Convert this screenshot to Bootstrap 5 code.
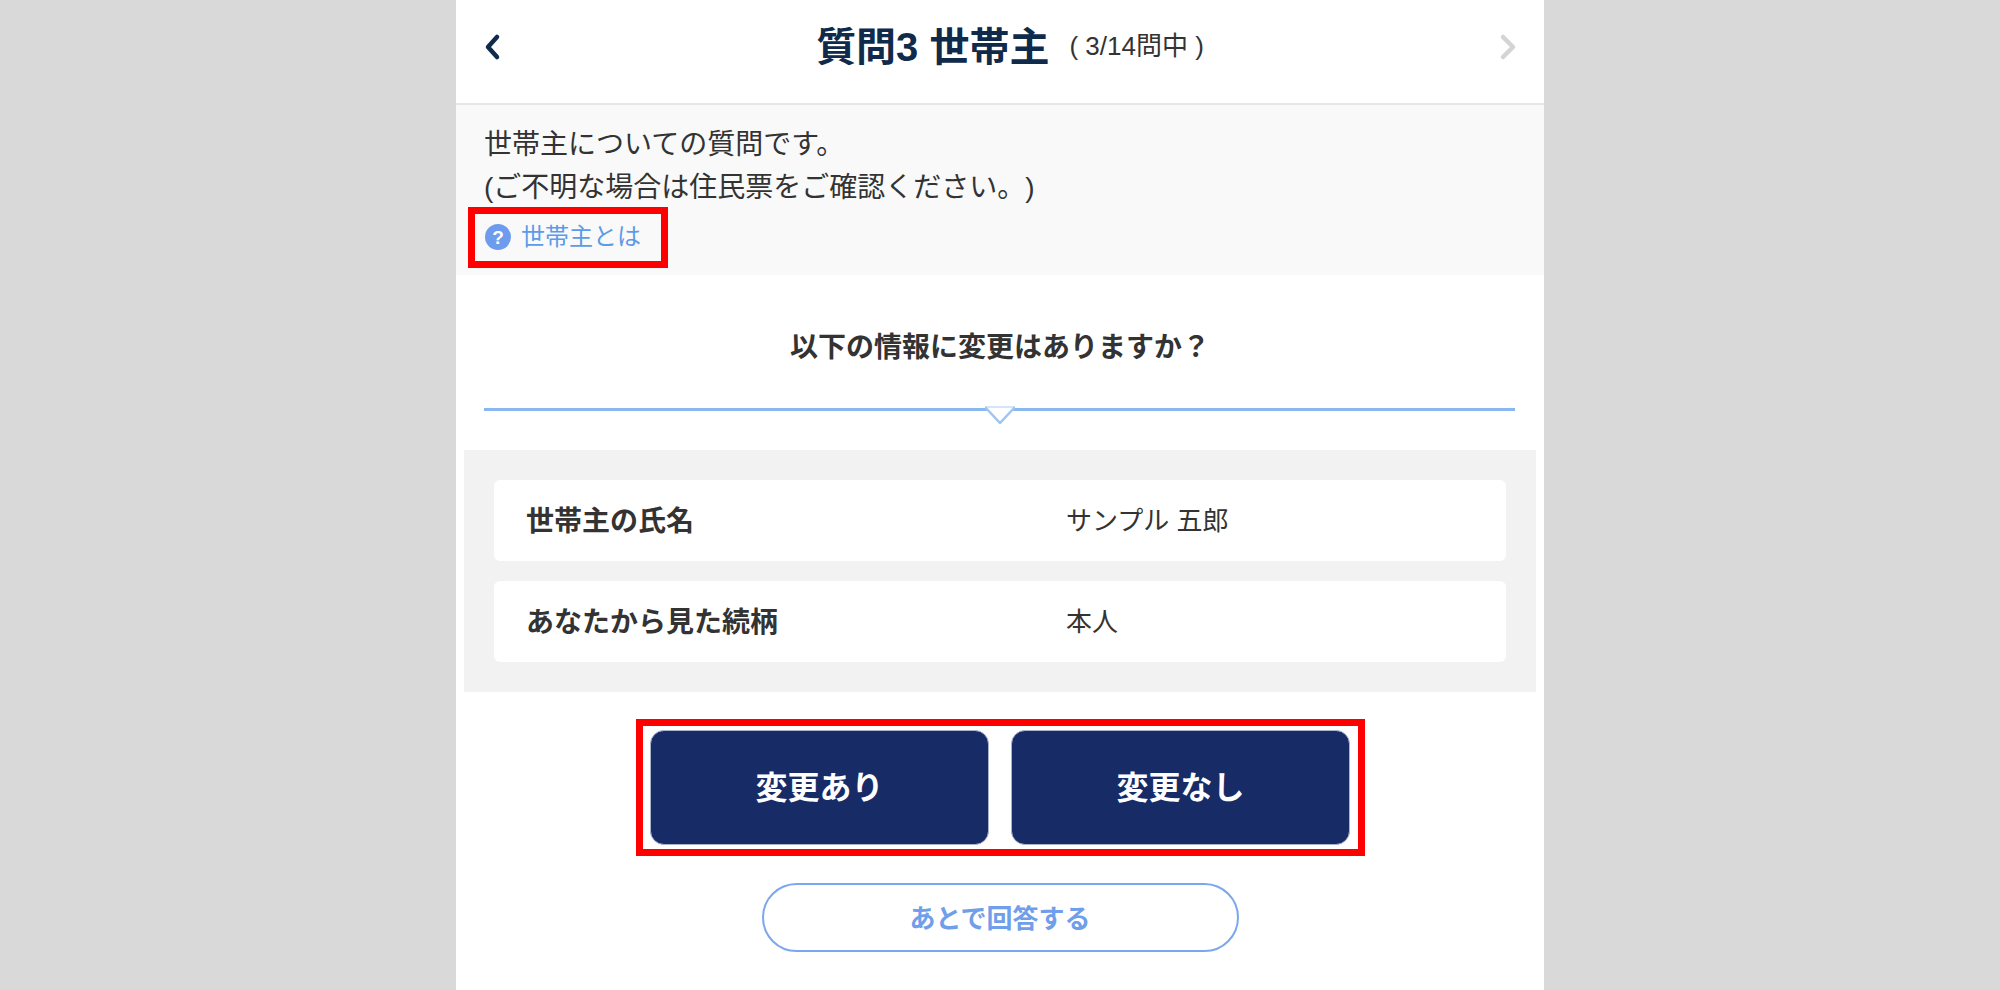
<!DOCTYPE html>
<html lang="ja">
<head>
<meta charset="utf-8">
<title>質問3 世帯主</title>
<link href="https://cdn.jsdelivr.net/npm/bootstrap@5.3.0/dist/css/bootstrap.min.css" rel="stylesheet">
<style>
html,body{height:100%;}
body{background:#d9d9d9;font-family:"Liberation Sans","Noto Sans CJK JP",sans-serif;color:#333;overflow:hidden;text-spacing-trim:space-all;}
.phone{width:1088px;height:990px;background:#fff;overflow:hidden;}
.qhead{height:105px;border-bottom:2px solid #e6e6e6;padding:0 26px 10px;}
.qtitle{font-size:40px;font-weight:700;color:#0f2a4a;margin:0;line-height:1;}
.qgroup{margin-left:20px;}
.qcount{font-size:26px;color:#333;margin-left:20px;}
.qintro{background:#f9f9f9;height:170px;padding:18px 28px 0;font-size:28px;line-height:43px;}
.qintro p{margin:0;}
.hl{border:7px solid #f00;}
.hl-link{margin:-2px 0 0 -16px;padding:1px 8px 3px 10px;width:200px;height:61px;color:#5b9be8;font-size:24px;text-decoration:none;line-height:1;gap:10px;}
.qmark{width:26px;height:26px;flex:none;}
.qq{font-size:28px;font-weight:700;text-align:center;margin:0;padding-top:54px;line-height:38px;}
.divider{height:3px;background:#8ab8ee;margin:41px 29px 0 28px;position:relative;}
.notch{position:absolute;left:50%;top:-2px;width:30px;height:18px;margin-left:-15px;}
.infobox{background:#f2f2f2;margin:39px 8px 0;padding:30px;}
.inforow{background:#fff;border-radius:6px;height:81px;font-size:26px;padding-top:2px;}
.inforow + .inforow{margin-top:20px;}
.ilabel{width:572px;padding-left:32px;font-weight:700;font-size:28px;}
.hl-btns{width:729px;height:137px;margin-top:27px;margin-left:1px;padding:4px 8px 4px 7px;gap:22px;}
.btn-main{flex:1;background:#172b66;color:#fff;border:1px solid #aab3cc;border-radius:14px;font-size:32px;font-weight:700;padding-top:6px;}
.btn-main:hover{background:#172b66;color:#fff;}
.btn-later{width:477px;height:69px;margin-top:27px;border:2px solid #7ba7ee;border-radius:35px;background:#fff;color:#6f9eea;font-size:26px;font-weight:700;padding-top:10px;}
</style>
</head>
<body>
<div class="phone mx-auto">
  <header class="qhead d-flex align-items-center justify-content-between">
    <svg width="20" height="30" viewBox="0 0 20 30" aria-hidden="true"><path d="M15 5 6 15l9 10" fill="none" stroke="#0f2a4a" stroke-width="4.5" stroke-linecap="round" stroke-linejoin="round"/></svg>
    <div class="qgroup d-flex align-items-center">
      <h1 class="qtitle">質問3 世帯主</h1>
      <span class="qcount">( 3/14問中 )</span>
    </div>
    <svg width="20" height="30" viewBox="0 0 20 30" aria-hidden="true"><path d="M5 5l10 10L5 25" fill="none" stroke="#d4d4d4" stroke-width="4.5" stroke-linecap="round" stroke-linejoin="round"/></svg>
  </header>
  <section class="qintro">
    <p>世帯主についての質問です。</p>
    <p>(ご不明な場合は住民票をご確認ください。)</p>
    <a href="#" class="hl hl-link d-flex align-items-center">
      <svg class="qmark" viewBox="0 0 26 26" aria-hidden="true"><circle cx="13" cy="13" r="13" fill="#6d9bee"/><text x="13" y="20" text-anchor="middle" font-size="19" font-weight="700" fill="#fff" font-family="Liberation Sans">?</text></svg>
      <span>世帯主とは</span>
    </a>
  </section>
  <p class="qq">以下の情報に変更はありますか？</p>
  <div class="divider">
    <svg class="notch" viewBox="0 0 30 18" aria-hidden="true"><path d="M0 1h30L15 17Z" fill="#fff"/><path d="M0 1h30" stroke="#d5e5f9" stroke-width="2"/><path d="M0 1l15 16L30 1" fill="none" stroke="#a0c5f2" stroke-width="2.5"/></svg>
  </div>
  <div class="infobox">
    <div class="inforow d-flex align-items-center"><div class="ilabel">世帯主の氏名</div><div>サンプル 五郎</div></div>
    <div class="inforow d-flex align-items-center"><div class="ilabel">あなたから見た続柄</div><div>本人</div></div>
  </div>
  <div class="d-flex flex-column align-items-center">
    <div class="hl hl-btns d-flex">
      <button type="button" class="btn btn-main">変更あり</button>
      <button type="button" class="btn btn-main">変更なし</button>
    </div>
    <button type="button" class="btn btn-later">あとで回答する</button>
  </div>
</div>
<script src="https://cdn.jsdelivr.net/npm/bootstrap@5.3.0/dist/js/bootstrap.bundle.min.js"></script>
</body>
</html>
